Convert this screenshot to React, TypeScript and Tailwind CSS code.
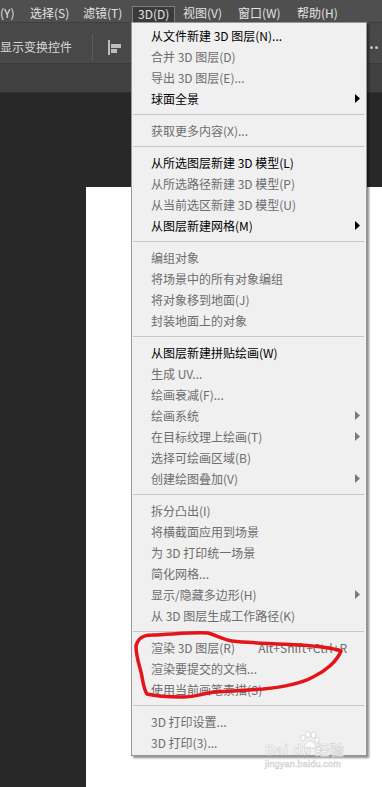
import React from 'react';

type Item = {
  label: string;
  enabled?: boolean;
  submenu?: boolean;
  shortcut?: string;
};

// null marks a separator
const menuItems: (Item | null)[] = [
  { label: '从文件新建 3D 图层(N)...', enabled: true },
  { label: '合并 3D 图层(D)' },
  { label: '导出 3D 图层(E)...' },
  { label: '球面全景', enabled: true, submenu: true },
  null,
  { label: '获取更多内容(X)...' },
  null,
  { label: '从所选图层新建 3D 模型(L)', enabled: true },
  { label: '从所选路径新建 3D 模型(P)' },
  { label: '从当前选区新建 3D 模型(U)' },
  { label: '从图层新建网格(M)', enabled: true, submenu: true },
  null,
  { label: '编组对象' },
  { label: '将场景中的所有对象编组' },
  { label: '将对象移到地面(J)' },
  { label: '封装地面上的对象' },
  null,
  { label: '从图层新建拼贴绘画(W)', enabled: true },
  { label: '生成 UV...' },
  { label: '绘画衰减(F)...' },
  { label: '绘画系统', submenu: true },
  { label: '在目标纹理上绘画(T)', submenu: true },
  { label: '选择可绘画区域(B)' },
  { label: '创建绘图叠加(V)', submenu: true },
  null,
  { label: '拆分凸出(I)' },
  { label: '将横截面应用到场景' },
  { label: '为 3D 打印统一场景' },
  { label: '简化网格...' },
  { label: '显示/隐藏多边形(H)', submenu: true },
  { label: '从 3D 图层生成工作路径(K)' },
  null,
  { label: '渲染 3D 图层(R)', shortcut: 'Alt+Shift+Ctrl+R' },
  { label: '渲染要提交的文档...' },
  { label: '使用当前画笔素描(S)' },
  null,
  { label: '3D 打印设置...' },
  { label: '3D 打印(3)...' },
];

const font = "font-['Noto_Sans_CJK_SC','Noto_Sans',sans-serif]";

function Arrow({ enabled }: { enabled?: boolean }) {
  return (
    <svg width="5" height="9" viewBox="0 0 5 9" className="shrink-0">
      <path d="M0 0 L5 4.5 L0 9 Z" fill={enabled ? '#000000' : '#7a7a7a'} />
    </svg>
  );
}

function MenuRow({ item }: { item: Item }) {
  return (
    <div
      className={`h-[21px] flex items-center pl-[19px] pr-[6px] whitespace-pre text-[12px] leading-[21px] ${
        item.enabled ? 'text-black' : 'text-[#6d6d6d]'
      }`}
    >
      <span>{item.label}</span>
      {item.shortcut && <span className="ml-auto mr-[13px]">{item.shortcut}</span>}
      {item.submenu && (
        <span className="ml-auto flex items-center">
          <Arrow enabled={item.enabled} />
        </span>
      )}
    </div>
  );
}

function MenuBar() {
  const items = [
    { label: '(Y)', w: 'w-[24px]', pl: 'pl-0' },
    { label: '选择(S)', w: 'w-[53px]', pl: 'pl-[6px]' },
    { label: '滤镜(T)', w: 'w-[55px]', pl: 'pl-[6px]' },
  ];
  const rest = [
    { label: '视图(V)', w: 'w-[57px]', pl: 'pl-[8px]' },
    { label: '窗口(W)', w: 'w-[59px]', pl: 'pl-[6px]' },
    { label: '帮助(H)', w: 'w-[70px]', pl: 'pl-[6px]' },
  ];
  return (
    <div className="h-[22px] bg-[#4f4f4f] flex items-end text-[12px] text-[#e2e2e2] whitespace-nowrap">
      {items.map((it) => (
        <div key={it.label} className={`${it.w} ${it.pl} h-[16px] leading-[14px] shrink-0`}>
          {it.label}
        </div>
      ))}
      <div className="w-[43px] h-[16px] shrink-0 bg-[#3a3a3a] border border-b-0 border-[#7c7c7c] pl-[5px] leading-[14px]">
        3D(D)
      </div>
      {rest.map((it) => (
        <div key={it.label} className={`${it.w} ${it.pl} h-[16px] leading-[14px] shrink-0`}>
          {it.label}
        </div>
      ))}
    </div>
  );
}

function OptionsBar() {
  return (
    <div className="h-[41px] bg-[#484848] border-t border-[#3e3e3e] pt-[8px] flex items-center text-[12px] text-[#d8d8d8]">
      <span className="whitespace-nowrap">显示变换控件</span>
      <div className="ml-[20px] w-px h-[27px] bg-[#5c5c5c]" />
      <svg width="14" height="15" viewBox="0 0 14 15" className="ml-[15px]">
        <rect x="0" y="0" width="2" height="15" fill="#bdbdbd" />
        <rect x="3" y="4" width="10" height="4" fill="#bdbdbd" />
        <rect x="3" y="9" width="6" height="4" fill="#bdbdbd" />
      </svg>
      <div className="ml-auto mr-[4px] flex gap-[2px]">
        <span className="w-[3px] h-[3px] rounded-full bg-[#c4c4c4]" />
        <span className="w-[3px] h-[3px] rounded-full bg-[#c4c4c4]" />
      </div>
    </div>
  );
}

function Annotation() {
  return (
    <svg
      className="absolute left-0 top-0 pointer-events-none"
      width="382"
      height="787"
      viewBox="0 0 382 787"
    >
      <path
        d="M136 646 C138 638 143 635 152 635 C175 634 195 632 208 633 C218 636 224 640 232 641 C250 643 280 644 300 645 C315 646 330 647 341 651 C337 661 326 671 313 677 C300 684 285 687 263 689 C245 690 232 691 215 692 C205 693 196 697 182 697 C168 697 155 696 147 694 C143 688 143 680 141 672 C139 664 136 656 136 646 Z"
        fill="none"
        stroke="#e4141b"
        strokeWidth="3.5"
        strokeLinecap="round"
        strokeLinejoin="round"
      />
    </svg>
  );
}

function Watermark() {
  return (
    <div className="absolute left-[265px] top-[731px] w-[90px] pointer-events-none font-['Liberation_Sans','Noto_Sans_CJK_SC',sans-serif] text-white [-webkit-text-stroke:0.6px_#c9c9c9] opacity-80">
      <svg width="24" height="20" viewBox="0 0 24 20" className="ml-[32px] mb-[-8px]">
        <g fill="#ffffff" stroke="#c9c9c9" strokeWidth="0.8">
          <ellipse cx="6" cy="7" rx="2.5" ry="3" />
          <ellipse cx="11" cy="3.5" rx="2.5" ry="3" />
          <ellipse cx="16.5" cy="4" rx="2.5" ry="3" />
          <ellipse cx="20" cy="9" rx="2.2" ry="2.8" />
          <path d="M7 17 C8 12 11 10 13 10 C16 10 18 13 19 17 Z" />
        </g>
      </svg>
      <div className="text-[14px] leading-[14px] font-bold tracking-[0.5px]">Bai du 经验</div>
      <div className="text-[9px] leading-[12px] mt-[1px] tracking-[0.2px]">jingyan.baidu.com</div>
    </div>
  );
}

export default function App() {
  return (
    <div className={`relative w-[382px] h-[787px] overflow-hidden bg-[#282828] ${font} flex flex-col`}>
      <MenuBar />
      <OptionsBar />
      <div className="h-[30px] bg-[#414141] border-t border-[#3a3a3a] border-b border-b-[#303030]" />
      <div className="flex-1 bg-[#282828] pt-[94px] pl-[86px] flex">
        <div className="flex-1 bg-white" />
      </div>

      {/* open 3D menu */}
      <div className="absolute left-[131px] top-[22px] w-[236px] bg-[#f0f0f0] border border-[#979797] pt-[2px] pb-[2px] shadow-[2px_2px_2px_rgba(0,0,0,0.45)]">
        {menuItems.map((item, i) =>
          item ? (
            <MenuRow key={i} item={item} />
          ) : (
            <div key={i} className="h-[11px] flex items-center pl-[1px] pr-[2px]">
              <div className="h-px w-full bg-[#c6c6c6]" />
            </div>
          )
        )}
      </div>

      <Watermark />
      <Annotation />
    </div>
  );
}
